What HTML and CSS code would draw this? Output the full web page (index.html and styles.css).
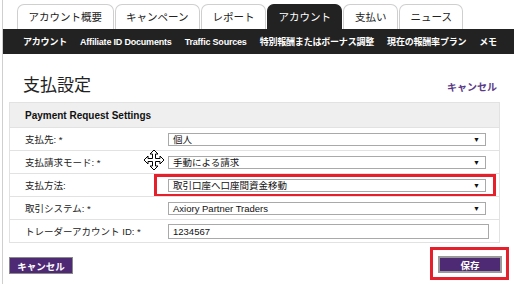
FILE: index.html
```html
<!DOCTYPE html>
<html lang="ja">
<head>
<meta charset="utf-8">
<link rel="stylesheet" href="styles.css">
</head>
<body>
<div class="page">
  <div class="tabs">
    <div class="tab">アカウント概要</div>
    <div class="tab">キャンペーン</div>
    <div class="tab">レポート</div>
    <div class="tab active">アカウント</div>
    <div class="tab">支払い</div>
    <div class="tab">ニュース</div>
  </div>
  <div class="subnav">
    <span>アカウント</span>
    <span>Affiliate ID Documents</span>
    <span>Traffic Sources</span>
    <span>特別報酬またはボーナス調整</span>
    <span>現在の報酬率プラン</span>
    <span>メモ</span>
  </div>
  <div class="title-row">
    <h1 class="title">支払設定</h1>
    <a class="cancel-link">キャンセル</a>
  </div>
  <div class="panel">
    <div class="panel-header">Payment Request Settings</div>
    <div class="row">
      <div class="label">支払先: *</div>
      <div class="select"><span>個人</span><span class="arrow">▼</span></div>
    </div>
    <div class="row">
      <div class="label">支払請求モード: *</div>
      <div class="select"><span>手動による請求</span><span class="arrow">▼</span></div>
      <svg class="cursor" width="22" height="22" viewBox="0 0 22 22">
        <path d="M11 1 L15 5 L12.5 5 L12.5 9.5 L17 9.5 L17 7 L21 11 L17 15 L17 12.5 L12.5 12.5 L12.5 17 L15 17 L11 21 L7 17 L9.5 17 L9.5 12.5 L5 12.5 L5 15 L1 11 L5 7 L5 9.5 L9.5 9.5 L9.5 5 L7 5 Z" fill="#fff" stroke="#000" stroke-width="1" stroke-linejoin="miter"/>
      </svg>
    </div>
    <div class="row">
      <div class="label">支払方法:</div>
      <div class="select"><span>取引口座へ口座間資金移動</span><span class="arrow">▼</span></div>
      <div class="highlight hl-select"></div>
    </div>
    <div class="row">
      <div class="label">取引システム: *</div>
      <div class="select"><span>Axiory Partner Traders</span><span class="arrow">▼</span></div>
    </div>
    <div class="row">
      <div class="label">トレーダーアカウント ID: *</div>
      <div class="input">1234567</div>
    </div>
  </div>
  <div class="actions">
    <button class="btn">キャンセル</button>
    <div class="save-wrap">
      <button class="btn save">保存</button>
    </div>
  </div>
</div>
</body>
</html>
```

FILE: styles.css
```css
* { box-sizing: border-box; }
html, body { margin: 0; padding: 0; background: #fff; }
body {
  font-family: "Liberation Sans", Arial, "Noto Sans CJK JP", sans-serif;
  color: #222;
}
.page {
  margin-left: 2px;
  border-left: 1px solid #cfcfcf;
  min-height: 284px;
  width: 512px;
}
.tabs {
  display: flex;
  gap: 1px;
  padding: 4px 0 0 14px;
  height: 29px;
}
.tab {
  height: 25px;
  border: 1px solid #cfcfcf;
  border-bottom: none;
  border-radius: 7px 7px 0 0;
  padding: 0 10.5px;
  font-family: "Noto Sans CJK JP", sans-serif;
  font-size: 10.5px;
  line-height: 24px;
  color: #222;
  background: #fff;
}
.tab.active {
  background: #222;
  border-color: #222;
  color: #fff;
}
.subnav {
  background: #222;
  height: 25px;
  display: flex;
  align-items: center;
  gap: 13px;
  padding-left: 20px;
  color: #fff;
  font-size: 9px;
  font-weight: bold;
  white-space: nowrap;
  overflow: hidden;
  letter-spacing: -0.2px;
}
.title-row {
  display: flex;
  justify-content: space-between;
  align-items: center;
  padding: 11px 17px 0 20px;
  height: 48px;
}
.title {
  margin: 0;
  font-family: "Noto Sans CJK JP", serif;
  font-weight: normal;
  font-size: 17px;
  color: #222;
}
.cancel-link {
  color: #5a3a86;
  font-size: 10px;
  font-weight: bold;
  margin-top: 6px;
}
.panel {
  margin: 0 14px 0 6px;
  border: 1px solid #e2e2e2;
}
.panel-header {
  background: #efefef;
  height: 24px;
  padding-left: 15px;
  font-size: 10px;
  font-weight: bold;
  line-height: 26px;
  color: #111;
}
.row {
  position: relative;
  display: grid;
  grid-template-columns: 158px 1fr;
  align-items: center;
  height: 23px;
  border-top: 1px solid #e2e2e2;
  padding-right: 13px;
}
.label {
  padding-left: 15px;
  font-size: 9.5px;
  color: #222;
}
.select, .input {
  height: 13px;
  border: 1px solid #a9a9a9;
  background: #fff;
  font-size: 9.5px;
  line-height: 11px;
  padding: 0 5px 0 4px;
  display: flex;
  justify-content: space-between;
  color: #111;
}
.input {
  height: 15px;
  line-height: 13px;
  margin-right: -3px;
}
.arrow {
  font-size: 7px;
  line-height: 11px;
}
.cursor {
  position: absolute;
  left: 133px;
  top: -2px;
}
.highlight {
  position: absolute;
  border: 3px solid #e5202a;
}
.hl-select {
  left: 144px;
  right: 3px;
  top: 0px;
  bottom: -1px;
}
.actions {
  display: flex;
  justify-content: space-between;
  align-items: center;
  margin: 4px 6px 0 6px;
}
.btn {
  background: #4f2a74;
  color: #fff;
  font-family: "Liberation Sans", "Noto Sans CJK JP", sans-serif;
  font-size: 9.5px;
  font-weight: bold;
  border: 1px solid #8a8a8a;
  height: 17px;
  width: 64px;
  padding: 0;
  margin-top: 4px;
}
.save-wrap {
  border: 3px solid #e5202a;
  padding: 5px 4px 4px 5px;
  margin-right: -1px;
}
.save {
  width: 64px;
  height: 17px;
  margin-top: 0;
  border: 2px solid #9a9a9a;
}
```
